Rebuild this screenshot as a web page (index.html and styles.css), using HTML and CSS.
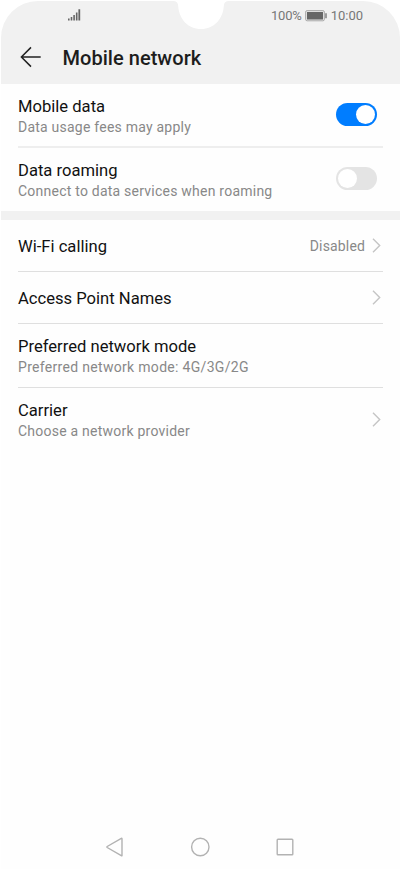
FILE: index.html
```html
<!DOCTYPE html>
<html lang="en">
<head>
<meta charset="utf-8">
<title>Mobile network</title>
<link rel="stylesheet" href="styles.css">
</head>
<body>
<div class="phone">
  <header class="header">
    <svg class="notch" width="54" height="29" viewBox="0 0 54 29"><path d="M0 0Q4 .4 4.200 5C5 18 14 28 27 28S49 18 49.800 5Q50 .4 54 0Z" fill="#fff"/></svg>
    <div class="status">
      <svg class="signal" width="13" height="12" viewBox="0 0 13 12" fill="#666"><path d="M0 9.500h1.600v2H0zM2.700 8h1.600v3.500H2.700zM5.300 6h1.600v5.500H5.300zM7.900 3.500h1.600v8H7.900zM10.400.2h1.800v11.300h-1.800z"/></svg>
      <div class="status-right">
        <span class="percent">100%</span>
        <svg width="22" height="12" viewBox="0 0 22 12"><rect x=".6" y=".6" width="18.800" height="10.200" rx="1.500" fill="#e4e4e4" stroke="#aaa"/><path d="M2 2h16v7.400H2z" fill="#666"/><path d="M20.300 3.200h1.400v5h-1.400z" fill="#777"/></svg>
        <span class="clock">10:00</span>
      </div>
    </div>
    <div class="titlebar">
      <svg width="22" height="22" viewBox="0 0 22 22" fill="none" stroke="#222" stroke-width="1.500"><path d="M20.700 11H1.700M11 1.400L1.400 11l9.600 9.600"/></svg>
      <h1 class="title">Mobile network</h1>
    </div>
  </header>
  <main>
    <section class="group">
      <div class="row first">
        <div class="text"><div class="name">Mobile data</div><div class="desc">Data usage fees may apply</div></div>
        <span class="switch on"></span>
      </div>
      <div class="row tall roaming">
        <div class="text"><div class="name">Data roaming</div><div class="desc">Connect to data services when roaming</div></div>
        <span class="switch"></span>
      </div>
    </section>
    <section class="group second">
      <div class="row short">
        <div class="name">Wi-Fi calling</div>
        <div class="end"><span class="value">Disabled</span><svg class="chevron" width="9" height="15" viewBox="0 0 9 15"><path d="M1 .8l6.700 6.700L1 14.200"/></svg></div>
      </div>
      <div class="row short">
        <div class="name">Access Point Names</div>
        <div class="end"><svg class="chevron" width="9" height="15" viewBox="0 0 9 15"><path d="M1 .8l6.700 6.700L1 14.200"/></svg></div>
      </div>
      <div class="row tall">
        <div class="text"><div class="name">Preferred network mode</div><div class="desc mode">Preferred network mode: 4G/3G/2G</div></div>
      </div>
      <div class="row tall carrier">
        <div class="text"><div class="name">Carrier</div><div class="desc">Choose a network provider</div></div>
        <div class="end"><svg class="chevron" width="9" height="15" viewBox="0 0 9 15"><path d="M1 .8l6.700 6.700L1 14.200"/></svg></div>
      </div>
    </section>
  </main>
  <nav class="nav">
    <svg width="20" height="20" viewBox="0 0 20 20"><path d="M17 1.800v16.600Q17 19 16.300 18.600L2.200 10.500Q1.500 10 2.200 9.500L16.300 1.300Q17 1 17 1.800Z"/></svg>
    <svg width="20" height="20" viewBox="0 0 20 20"><circle cx="10.300" cy="10" r="8.700"/></svg>
    <svg width="20" height="20" viewBox="0 0 20 20"><rect x="2.200" y="2.200" width="15.600" height="15.600" rx=".8"/></svg>
  </nav>
</div>
</body>
</html>
```
FILE: styles.css
```css
* { box-sizing: border-box; }
body { margin: 0; background: #fff; font-family: Roboto, sans-serif; }
.phone {
  display: flex;
  flex-direction: column;
  width: 399px;
  height: 868px;
  margin: 1px;
  background: #fefefe;
  border-radius: 37px 37px 0 0;
  overflow: hidden;
}
.header { position: relative; height: 83px; background: #f1f1f1; }
.notch { position: absolute; left: 173px; top: 0; }
.status { display: flex; justify-content: space-between; align-items: center; height: 29px; padding: 0 37px 0 67px; }
.signal { display: block; margin-bottom: 1px; }
.status-right { display: flex; align-items: center; gap: 4px; font-size: 13px; color: #777; }
.percent { letter-spacing: -.2px; margin-right: -1px; }
.status-right svg { display: block; }
.titlebar { display: flex; align-items: center; gap: 20.500px; height: 54px; padding: 0 0 0 19px; }
.titlebar svg { display: block; }
.title { margin: 1px 0 0; font-size: 20px; line-height: 24px; letter-spacing: .04px; font-weight: 500; color: #1d1d1d; }
.group { padding: 0 17px; }
.second { border-top: 9px solid #f1f1f1; }
.row { display: flex; align-items: center; justify-content: space-between; border-bottom: 1px solid #dfdfdf; }
.row:last-child { border-bottom: 0; }
.first { height: 64px; border-bottom: 2px solid #eee; }
.tall { height: 64px; }
.roaming { height: 63px; }
.carrier { height: 63px; }
.short { height: 52px; }
.text { padding-top: 3px; }
.first .text { padding-top: 5px; }
.name { font-size: 16.600px; line-height: 20px; color: #111; white-space: nowrap; }
.short .name { padding-top: 2px; }
.desc { font-size: 14px; line-height: 21px; letter-spacing: .23px; color: #888; white-space: nowrap; }
.mode { letter-spacing: .31px; }
.end { display: flex; align-items: center; gap: 7px; padding-right: 2px; }
.value { font-size: 14px; letter-spacing: .15px; color: #888; }
.chevron { display: block; fill: none; stroke: #c5c5c5; stroke-width: 1.400; }
.switch { display: flex; width: 41px; height: 23px; padding: 2px; margin: 0 6px 1px 0; border-radius: 12px; background: #e4e4e4; }
.switch::before { content: ""; width: 19px; height: 19px; border-radius: 50%; background: #fff; }
.roaming .switch { margin-bottom: 2px; }
.switch.on { justify-content: flex-end; background: #007dff; }
.nav { display: flex; justify-content: space-between; margin: auto 104.800px 12.500px 104px; }
.nav svg { display: block; fill: none; stroke: #b2b2b2; stroke-width: 1.400; }
```
